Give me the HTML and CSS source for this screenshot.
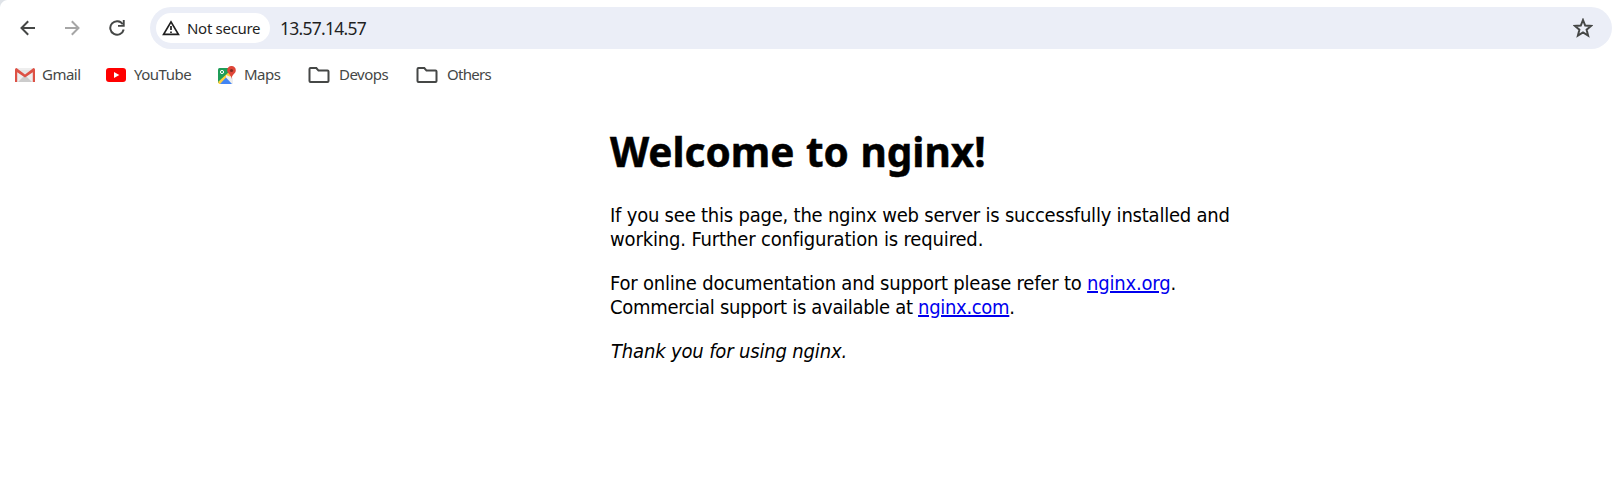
FILE: index.html
```html
<!DOCTYPE html>
<html lang="en">
<head>
<meta charset="utf-8">
<title>Welcome to nginx!</title>
<link rel="stylesheet" href="styles.css">
</head>
<body>
<header class="browser">
  <div class="toolbar">
    <svg class="nav back" viewBox="0 0 16 16"><path d="M15 8H2M8.2 1.2L1.5 8l6.700 6.800"/></svg>
    <svg class="nav forward" viewBox="0 0 16 16"><path d="M1 8h13M7.800 1.200L14.500 8l-6.700 6.800"/></svg>
    <svg class="nav reload" viewBox="0 0 16 16"><path d="M13.800 4.300A6.800 6.800 0 1 0 14.700 9.500"/><path class="solid" d="M15.700 0v6.800H9V4.900h4.800V0z"/></svg>
    <div class="omnibox">
      <div class="chip">
        <svg class="warning" viewBox="0 0 18 16"><path d="M9 1.900L1.600 14.400h14.800z"/><path d="M9 6v4M9 11.400v1.600"/></svg>
        <span>Not secure</span>
      </div>
      <span class="address">13.57.14.57</span>
      <svg class="star" viewBox="0 0 20 20"><path d="M10 2l2.200 5.500 5.900.4-4.500 3.800 1.500 5.900L10 14.400l-5.100 3.200 1.500-5.900L1.900 7.900l5.900-.4z"/></svg>
    </div>
  </div>
  <nav class="bookmarks">
    <a class="bookmark gmail"><svg viewBox="0 0 20 14"><path fill="#eee" d="M1 0h18v14H1z"/><path fill="#ccc" d="M3 14l7-7 7 7z"/><path fill="#e5e5e5" d="M3 2h14l-7 6z"/><path fill="#dd5145" d="M0 1.500Q0 0 1.500 0L10 6.500 18.500 0Q20 0 20 1.500V14h-2.200V4.300L10 9.600 2.200 4.300V14H0z"/></svg><span>Gmail</span></a>
    <a class="bookmark youtube"><svg viewBox="0 0 20 14"><rect width="20" height="14" rx="3" fill="#f00"/><path fill="#fff" d="M8 4l5.300 3L8 10z"/></svg><span>YouTube</span></a>
    <a class="bookmark maps"><svg viewBox="0 0 19 19"><path fill="#1f9d58" d="M1 3.500Q1 2 2.500 2H15v5L2 17H1z"/><path fill="#ffcf3d" d="M1 16L13 5l3 3L4 18H2z"/><path fill="#eee" d="M9 9l7 3v6H9z"/><path fill="#4285f4" d="M3 18l6-6.500 6 6.500z"/><circle cx="5" cy="6" r="1.600" fill="none" stroke="#fff"/><path fill="#df4638" d="M14.500 0A4.200 4.200 0 0 0 10.200 4.300C10.200 8 14 8 14.500 13 15 8 18.800 8 18.800 4.300A4.200 4.200 0 0 0 14.500 0z"/><circle cx="14.500" cy="4.500" r="1.600" fill="#812b22"/></svg><span>Maps</span></a>
    <a class="bookmark folder devops"><svg viewBox="0 0 22 16"><path d="M2.500 1h5.800l2.200 2.600h9q1 0 1 1v9.300q0 1-1 1h-17q-1 0-1-1V2q0-1 1-1z"/></svg><span>Devops</span></a>
    <a class="bookmark folder others"><svg viewBox="0 0 22 16"><path d="M2.500 1h5.800l2.200 2.600h9q1 0 1 1v9.300q0 1-1 1h-17q-1 0-1-1V2q0-1 1-1z"/></svg><span>Others</span></a>
  </nav>
</header>
<main class="page">
  <h1>Welcome to nginx!</h1>
  <p><span class="l1">If you see this page, the nginx web server is successfully installed and</span><br><span class="l2">working. Further configuration is required.</span></p>
  <p><span class="l3">For online documentation and support please refer to <a class="link">nginx.org</a>.</span><br><span class="l4">Commercial support is available at <a class="link">nginx.com</a>.</span></p>
  <p><em class="l5">Thank you for using nginx.</em></p>
</main>
</body>
</html>
```
FILE: styles.css
```css
body {
  margin: 0;
  background: #fff;
  overflow: hidden;
}
.browser {
  height: 96px;
  font-family: "Noto Sans", sans-serif;
  background: radial-gradient(circle at 8px 8px, #fff 7.500px, #dfe3e8 8.500px) 0 0 / 8px 8px no-repeat #fff;
}
.toolbar {
  display: flex;
  align-items: center;
  box-sizing: border-box;
  height: 49px;
  padding: 7px 6px 0 20px;
}
.nav {
  flex: none;
  width: 16px;
  height: 16px;
  fill: none;
  stroke: #454746;
  stroke-width: 2;
}
.forward {
  margin-left: 28px;
  stroke: #a6a6a6;
}
.reload {
  margin-left: 29px;
}
.solid {
  fill: #454746;
  stroke: none;
}
.omnibox {
  display: flex;
  align-items: center;
  flex: 1;
  box-sizing: border-box;
  height: 42px;
  margin-left: 25px;
  padding: 0 19px 0 6px;
  border-radius: 21px;
  background: #ebeef7;
}
.chip {
  display: flex;
  align-items: center;
  box-sizing: border-box;
  width: 114px;
  height: 30px;
  padding: 0 0 1px 6px;
  border-radius: 15px;
  background: #fff;
  color: #1f1f1f;
  font-size: 15px;
  letter-spacing: -0.3px;
  white-space: nowrap;
}
.warning {
  width: 18px;
  height: 16px;
  margin-right: 7px;
  fill: none;
  stroke: #1f1f1f;
  stroke-width: 1.700;
}
.address {
  margin-left: 10px;
  color: #1f1f1f;
  font-size: 17.5px;
  letter-spacing: -0.75px;
}
.star {
  width: 20px;
  height: 20px;
  margin-left: auto;
  fill: none;
  stroke: #454746;
  stroke-width: 2;
}
.bookmarks {
  display: flex;
  padding: 13px 0 0 15px;
}
.bookmark {
  display: flex;
  align-items: center;
  height: 26px;
  color: #454746;
  font-size: 15px;
  letter-spacing: -0.5px;
  white-space: nowrap;
}
.bookmark span {
  padding-bottom: 2px;
}
.bookmark svg {
  flex: none;
  width: 20px;
  height: 14px;
  margin-right: 8px;
}
.gmail { width: 91px; }
.youtube { width: 111px; }
.maps { width: 91px; }
.devops { width: 108px; }
.others { letter-spacing: -0.7px; }
.gmail svg {
  margin-right: 7px;
}
.maps svg {
  width: 19px;
  height: 19px;
}
.folder svg {
  width: 22px;
  height: 16px;
  margin-right: 9px;
  fill: none;
  stroke: #454746;
  stroke-width: 2;
}
.page {
  width: 700px;
  margin: 31px 0 0 610px;
  color: #000;
  font: 20px/24px "DejaVu Sans Condensed", "DejaVu Sans", sans-serif;
  font-stretch: condensed;
  white-space: nowrap;
}
h1 {
  margin: 0 0 26px;
  font-family: "Noto Sans", sans-serif;
  font-stretch: normal;
  font-size: 40.5px;
  line-height: 50px;
  word-spacing: 1px;
  -webkit-text-stroke: 0.5px #000;
}
p {
  margin: 0 0 20px;
}
.l1 { letter-spacing: -0.215px; }
.l2 { letter-spacing: -0.15px; }
.l3 { letter-spacing: -0.2px; }
.l4 { letter-spacing: -0.31px; }
.l5 {
  padding-left: 1px;
  letter-spacing: -0.16px;
}
.link {
  color: #0000ee;
  text-decoration: underline;
}
```
